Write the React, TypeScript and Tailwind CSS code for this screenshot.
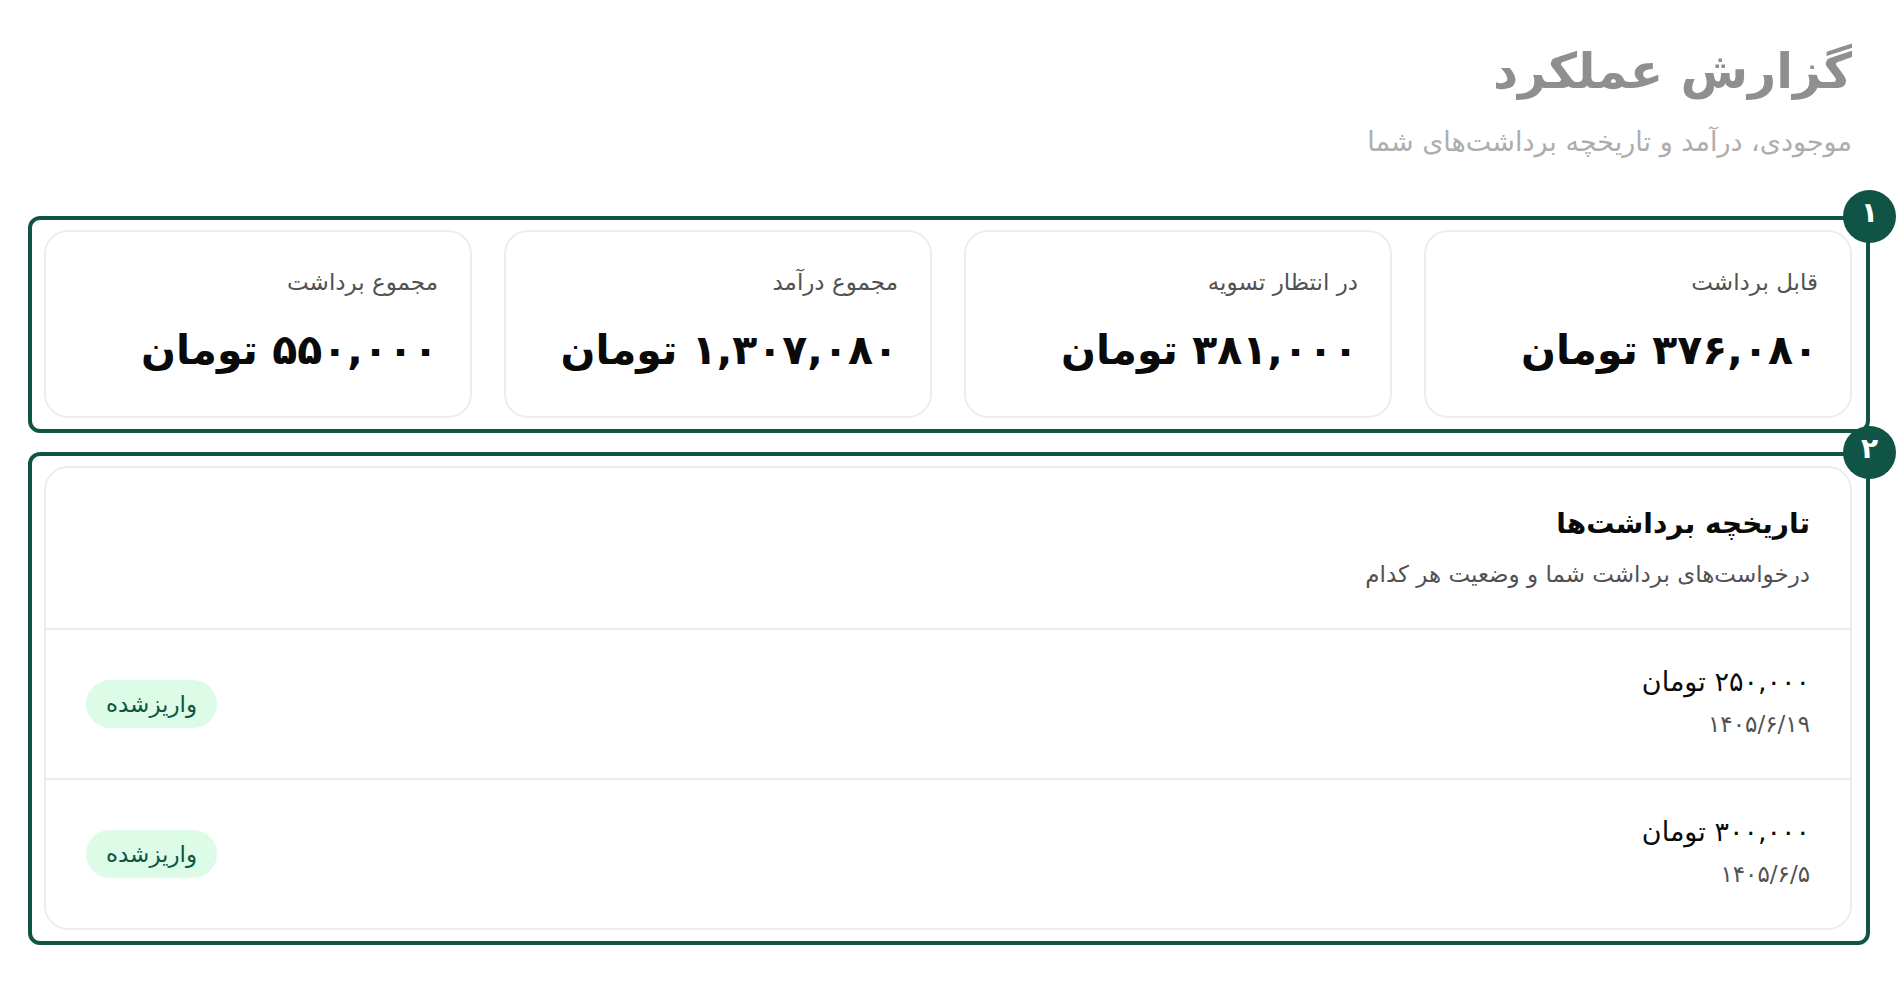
import type { ReactNode } from 'react';

interface Stat {
  label: string;
  value: string;
}

interface Withdrawal {
  amount: string;
  date: string;
  status: string;
}

const stats: Stat[] = [
  { label: 'قابل برداشت', value: '۳۷۶,۰۸۰ تومان' },
  { label: 'در انتظار تسویه', value: '۳۸۱,۰۰۰ تومان' },
  { label: 'مجموع درآمد', value: '۱,۳۰۷,۰۸۰ تومان' },
  { label: 'مجموع برداشت', value: '۵۵۰,۰۰۰ تومان' },
];

const withdrawals: Withdrawal[] = [
  { amount: '۲۵۰,۰۰۰ تومان', date: '۱۴۰۵/۶/۱۹', status: 'واریزشده' },
  { amount: '۳۰۰,۰۰۰ تومان', date: '۱۴۰۵/۶/۵', status: 'واریزشده' },
];

function Highlight({ step, children }: { step: string; children: ReactNode }) {
  return (
    <section className="relative rounded-xl border-4 border-[#0f5445] pt-[10px] pr-[14px] pb-[11px] pl-3">
      {children}
      <span className="absolute -top-[30px] -right-[30px] flex size-[53px] items-center justify-center rounded-full bg-[#0f5445] pb-2 text-[28px] leading-10 font-bold text-white">
        {step}
      </span>
    </section>
  );
}

function StatCard({ label, value }: Stat) {
  return (
    <div className="rounded-3xl border-2 border-[#ededed] px-8 py-8">
      <dt className="text-[23px] leading-9 text-[#525252]">{label}</dt>
      <dd className="mt-4 text-[41px] leading-[68px] font-bold whitespace-nowrap text-[#0a0a0a]">{value}</dd>
    </div>
  );
}

function WithdrawalRow({ amount, date, status }: Withdrawal) {
  return (
    <li className="flex h-[150px] items-center justify-between border-t-2 border-[#ededed] px-10">
      <div className="pb-1">
        <p className="text-[27px] leading-10 font-medium text-[#0a0a0a]">{amount}</p>
        <p className="mt-1 text-[23px] leading-9 text-[#525252]">{date}</p>
      </div>
      <span className="rounded-full bg-[#dcfce7] px-5 text-[23px] leading-[48px] font-medium text-[#0f5445]">
        {status}
      </span>
    </li>
  );
}

export default function App() {
  return (
    <main
      dir="rtl"
      className="min-h-screen bg-white pt-8 pr-[31px] pb-8 pl-7 font-['DejaVu_Sans','Noto_Sans',sans-serif]"
    >
      <header className="pr-[18px]">
        <h1 className="text-[49px] leading-[80px] font-bold text-[#8f8f8f]">گزارش عملکرد</h1>
        <p className="mt-2 text-[27px] leading-[44px] text-[#adadad]">موجودی، درآمد و تاریخچه برداشت‌های شما</p>
      </header>

      <div className="mt-[52px] flex flex-col gap-[19px]">
        <Highlight step="۱">
          <dl className="grid grid-cols-4 gap-8">
            {stats.map((stat) => (
              <StatCard key={stat.label} {...stat} />
            ))}
          </dl>
        </Highlight>

        <Highlight step="۲">
          <div className="rounded-3xl border-2 border-[#ededed]">
            <div className="h-[160px] px-10 pt-8">
              <h2 className="text-[28px] leading-[48px] font-bold text-[#0a0a0a]">تاریخچه برداشت‌ها</h2>
              <p className="mt-2 text-[23px] leading-9 text-[#525252]">درخواست‌های برداشت شما و وضعیت هر کدام</p>
            </div>
            <ul>
              {withdrawals.map((item) => (
                <WithdrawalRow key={item.date} {...item} />
              ))}
            </ul>
          </div>
        </Highlight>
      </div>
    </main>
  );
}
